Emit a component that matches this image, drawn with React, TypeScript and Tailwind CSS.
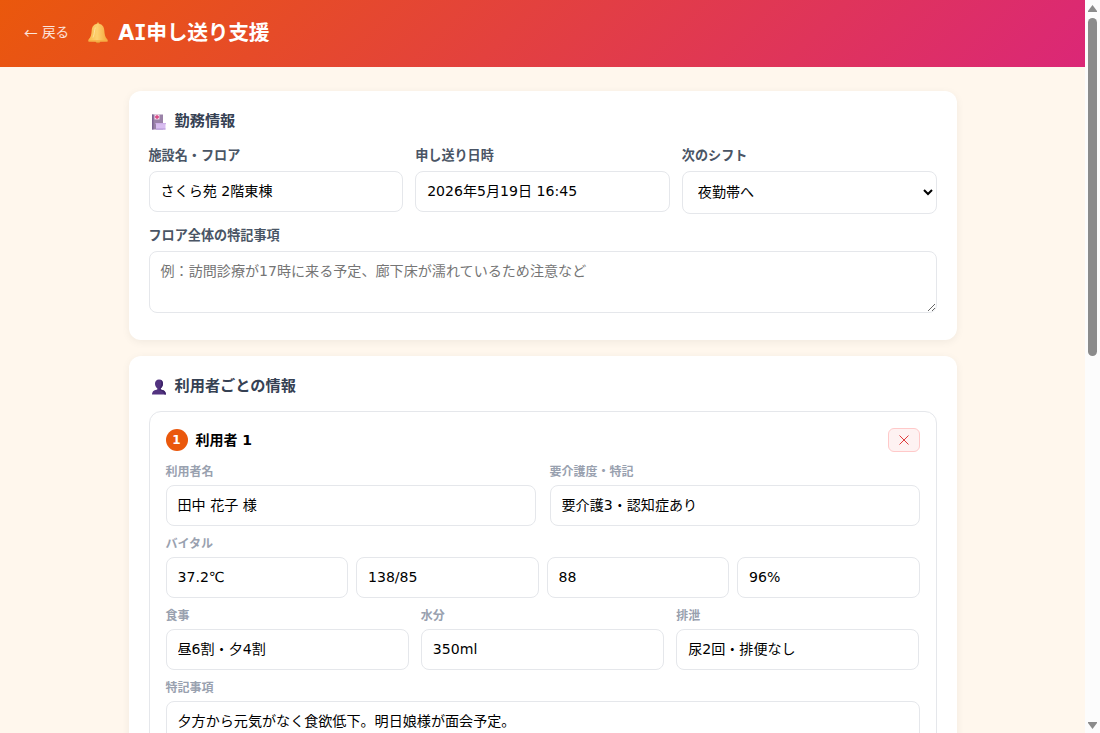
import React from 'react';
import { clsx } from 'clsx';

const VITALS = ['37.2℃', '138/85', '88', '96%'];

const CARE_ITEMS = [
  { label: '食事', value: '昼6割・夕4割' },
  { label: '水分', value: '350ml', latin: true },
  { label: '排泄', value: '尿2回・排便なし' },
];

// Latin-only values have a shorter line box than mixed ones, so they sit a bit lower
const TextInput = ({ value, latin }: { value: string; latin?: boolean }) => (
  <input
    className={clsx(
      'block h-[41px] w-full rounded-lg border border-gray-200 bg-white px-[11px] text-[14.08px] text-black outline-none',
      latin ? 'pb-px' : 'pb-[3px]'
    )}
    defaultValue={value}
  />
);

const BellIcon = () => (
  <svg className="mb-0.5 h-[22px] w-[22px]" viewBox="0 0 22 22">
    <defs>
      <linearGradient id="bell" x1="0" x2="1">
        <stop offset="0" stopColor="#f9b94a" />
        <stop offset="0.45" stopColor="#fdd270" />
        <stop offset="1" stopColor="#f5a63d" />
      </linearGradient>
    </defs>
    <ellipse cx="11" cy="19.8" rx="2.4" ry="1.4" fill="#e58f2e" />
    <circle cx="11" cy="1.7" r="1.3" fill="#f6b048" />
    <path d="M11 1.800c-4 0-6 2.800-6.300 6.600-.3 4-.8 6.700-3.200 9v2h19v-2c-2.400-2.300-2.900-5-3.200-9C17 4.600 15 1.800 11 1.800z" fill="url(#bell)" />
    <path d="M1.500 18.200h19v1.200h-19z" fill="#f7ae45" />
    <path d="M8.300 5.500c-1 2.500-.6 6.500-2.300 10" stroke="#ffe29a" strokeWidth="1" fill="none" />
  </svg>
);

const HospitalIcon = () => (
  <svg className="h-4 w-4" viewBox="0 0 16 16">
    <path d="M0 .5h11v15H0z" fill="#9a82a8" />
    <path d="M0 .5h1.500v15H0z" fill="#7b6491" />
    <rect x="2.5" y="0.5" width="5" height="5" fill="#f6d7e8" />
    <path d="M5 1v4M3 3h4" stroke="#d8407f" strokeWidth="1.3" />
    <path d="M4 9h9.500v6.500H4z" fill="#d8bdf0" />
    <path d="M3.500 9h10.500v1.200H3.500z" fill="#cfb0e8" />
    <path d="M4 14.500h9.500v1H4z" fill="#b596d8" />
  </svg>
);

const PersonIcon = () => (
  <svg className="-ml-px h-4 w-4" viewBox="0 0 16 16" fill="#533380">
    <path d="M8 .5c-2.500 0-4 1.700-4 4 0 2.200.8 3.900 2.300 4.700v1.300C4 11.200 1.200 11.500 1 15.500h14c-.2-4-3-4.300-5.300-5V9.200C11.200 8.400 12 6.700 12 4.500c0-2.300-1.500-4-4-4z" />
    <path d="M9.500 1c1.200 1.300.8 5.500-.8 8v2.200c1.500.8 3.800 1.300 4.800 4.300H15c-.2-4-3-4.300-5.300-5V9.200C11.200 8.400 12 6.700 12 4.500c0-1.800-1-3-2.500-3.500z" fill="#3f2469" />
  </svg>
);

const FieldLabel = ({ children }: { children: React.ReactNode }) => (
  <label className="mb-[5px] block h-[21px] pt-px text-[13.12px] leading-5 font-bold text-gray-600">{children}</label>
);

const SmallLabel = ({ children }: { children: React.ReactNode }) => (
  <label className="mb-1 block h-[19px] pt-px text-xs leading-[18px] font-bold text-gray-400">{children}</label>
);

const Card = ({ icon, title, className, children }: {
  icon: React.ReactNode;
  title: string;
  className?: string;
  children: React.ReactNode;
}) => (
  <section className={clsx('rounded-xl bg-white px-5 pt-5 shadow-[0_2px_8px_rgba(0,0,0,0.06)]', className)}>
    <h2 className="flex h-[22px] items-center pl-[3px] text-[15.2px] font-bold text-gray-700">
      <span className="w-[23px]">{icon}</span>
      <span className="pb-0.5 leading-5">{title}</span>
    </h2>
    {children}
  </section>
);

// Page scrollbar
const Scrollbar = () => (
  <div className="flex w-[15px] shrink-0 flex-col items-center bg-[#fcfcfc] pt-[5px] pb-1">
    <svg className="h-2 w-[9px]" viewBox="0 0 9 8" fill="#8b8b8b">
      <path d="M4.500 0 9 6v1H0V6z" />
    </svg>
    <div className="mt-[5px] h-[338px] w-[9px] rounded-full bg-[#8b8b8b]" />
    <svg className="mt-auto h-2 w-[9px]" viewBox="0 0 9 8" fill="#8b8b8b">
      <path d="M0 1h9v1L4.500 8 0 2z" />
    </svg>
  </div>
);

export default function App() {
  return (
    <div className="flex h-[733px] overflow-hidden bg-[#fff7ed] font-['DejaVu_Sans','Noto_Sans_CJK_JP',sans-serif] text-black">
      <div className="min-w-0 flex-1">
        <header className="flex h-[67px] items-center bg-[linear-gradient(135deg,#ea580c,#db2777)] px-6 text-white">
          <a className="flex items-center gap-1 pb-0.5 text-[13.6px] text-white/85">
            <span className="w-[14px] font-['Noto_Sans_CJK_JP',sans-serif]">←</span>
            戻る
          </a>
          <h1 className="ml-[18px] flex items-center gap-[9px] text-[20.8px] font-bold">
            <BellIcon />
            <span className="pb-0.5 leading-7 tracking-[-0.3px]">
              A<span className="font-['DejaVu_Sans_Mono',monospace]">I</span>申し送り支援
            </span>
          </h1>
        </header>

        <main className="mx-auto max-w-[860px] px-4 pt-6">
          <Card icon={<HospitalIcon />} title="勤務情報" className="h-[249px]">
            <div className="mt-3 grid grid-cols-3 gap-3">
              <div>
                <FieldLabel>施設名・フロア</FieldLabel>
                <TextInput value="さくら苑 2階東棟" />
              </div>
              <div>
                <FieldLabel>申し送り日時</FieldLabel>
                <TextInput value="2026年5月19日 16:45" />
              </div>
              <div>
                <FieldLabel>次のシフト</FieldLabel>
                <select className="block h-[43px] w-full rounded-lg border border-gray-200 bg-white px-[11px] pb-0.5 text-[14.08px] text-black">
                  <option>夜勤帯へ</option>
                </select>
              </div>
            </div>
            <div className="mt-[11px]">
              <FieldLabel>フロア全体の特記事項</FieldLabel>
              <textarea
                className="block h-[62px] w-full resize-y rounded-lg border border-gray-200 px-[11px] py-[9px] text-[14.08px] leading-[20px] placeholder:text-[#757575]"
                placeholder="例：訪問診療が17時に来る予定、廊下床が濡れているため注意など"
              />
            </div>
          </Card>

          <Card icon={<PersonIcon />} title="利用者ごとの情報" className="mt-4">
            <div className="mt-[13px] rounded-xl border border-gray-200 p-4">
              <div className="mb-2.5 flex h-6 items-center justify-between">
                <div className="flex items-center gap-2 text-sm font-bold">
                  <span className="flex h-[22px] w-[22px] items-center justify-center rounded-full bg-[#ea580c] text-xs text-white">1</span>
                  <span className="leading-5">利用者 1</span>
                </div>
                <button className="flex h-6 w-8 items-center justify-center rounded-md border border-red-200 bg-red-50">
                  <svg className="h-[10px] w-[10px]" viewBox="0 0 10 10" stroke="#dc2626" strokeWidth="0.9">
                    <path d="M.5.5l9 9M9.500.5l-9 9" />
                  </svg>
                </button>
              </div>

              <div className="grid grid-cols-2 gap-3.5">
                <div>
                  <SmallLabel>利用者名</SmallLabel>
                  <TextInput value="田中 花子 様" />
                </div>
                <div>
                  <SmallLabel>要介護度・特記</SmallLabel>
                  <TextInput value="要介護3・認知症あり" />
                </div>
              </div>

              <div className="mt-2">
                <SmallLabel>バイタル</SmallLabel>
                <div className="grid grid-cols-4 gap-2">
                  {VITALS.map((v) => (
                    <TextInput key={v} value={v} latin />
                  ))}
                </div>
              </div>

              <div className="mt-2 grid grid-cols-3 gap-3">
                {CARE_ITEMS.map((item) => (
                  <div key={item.label}>
                    <SmallLabel>{item.label}</SmallLabel>
                    <TextInput value={item.value} latin={item.latin} />
                  </div>
                ))}
              </div>

              <div className="mt-2">
                <SmallLabel>特記事項</SmallLabel>
                <textarea
                  className="block h-[62px] w-full resize-y rounded-lg border border-gray-200 px-[11px] py-[9px] text-[14.08px] leading-[20px]"
                  defaultValue="夕方から元気がなく食欲低下。明日娘様が面会予定。"
                />
              </div>
            </div>
          </Card>
        </main>
      </div>
      <Scrollbar />
    </div>
  );
}
